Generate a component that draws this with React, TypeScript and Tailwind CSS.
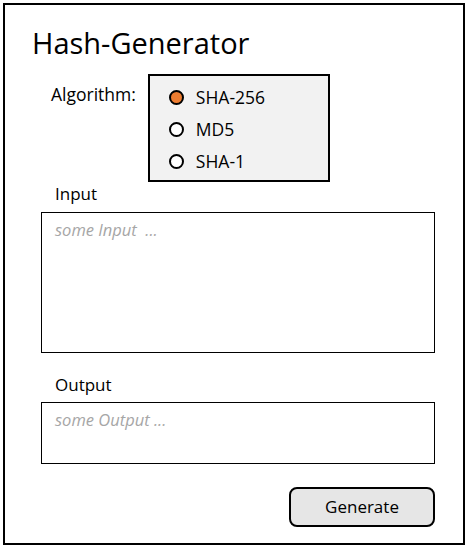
export default function App() {
  const options = ["SHA-256", "MD5", "SHA-1"];
  return (
    <div className="p-[3px]" style={{ fontFamily: "'Open Sans', 'Noto Sans', sans-serif" }}>
      <div className="flex h-[542px] w-[462px] flex-col border-2 border-black bg-white pl-[28px] pr-[28px] text-black">
        <h1 className="-ml-[1px] mt-[18px] text-[29px] leading-[40px]">Hash-Generator</h1>

        <div className="mt-[11px] flex">
          <span className="ml-[18px] mt-[8px] text-[17.5px] leading-[24px]">Algorithm:</span>
          <div className="ml-[12px] flex h-[108px] w-[182px] flex-col gap-[8px] border-2 border-black bg-[#f2f2f2] pl-[19px] pt-[9px]">
            {options.map((o, i) => (
              <label key={o} className="flex items-center gap-[12px] text-[17.5px] leading-[24px]">
                <span
                  className={
                    "h-[15px] w-[15px] rounded-full border-2 border-black " +
                    (i === 0 ? "bg-[#ed7d31]" : "bg-white")
                  }
                />
                {o}
              </label>
            ))}
          </div>
        </div>

        <span className="ml-[22px] mt-0 text-[17px] leading-[24px]">Input</span>
        <div className="ml-[8px] mt-[6px] h-[141px] w-[394px] border border-black px-[13px] pt-[5px] text-[16.5px] italic leading-[24px] text-[#a6a6a6]">
          some Input &nbsp;...
        </div>

        <span className="ml-[22px] mt-[20px] text-[17px] leading-[24px]">Output</span>
        <div className="ml-[8px] mt-[5px] h-[62px] w-[394px] border border-black px-[13px] pt-[5px] text-[16.5px] italic leading-[24px] text-[#a6a6a6]">
          some Output ...
        </div>

        <div className="mt-[23px] flex justify-end">
          <button className="h-[40px] w-[146px] rounded-[8px] border-2 border-black bg-[#e6e6e6] text-[17px] leading-[24px]">
            Generate
          </button>
        </div>
      </div>
    </div>
  );
}
